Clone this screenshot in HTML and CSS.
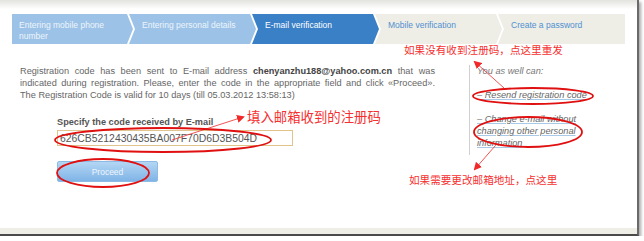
FILE: index.html
```html
<!DOCTYPE html>
<html lang="en">
<head>
    <meta charset="UTF-8">
    <title>E-mail verification</title>
    <link rel="stylesheet" href="styles.css">
</head>
<body>
    <div class="shot">
        <div class="steps">
            <div class="step done first">Entering mobile phone number</div>
            <div class="step done">Entering personal details</div>
            <div class="step active">E-mail verification</div>
            <div class="step todo">Mobile verification</div>
            <div class="step todo last">Create a password</div>
        </div>

        <div class="main">
            <div class="info">
                <div class="text">
                    <span class="line just">Registration code has been sent to E-mail address <b>chenyanzhu188@yahoo.com.cn</b> that was</span>
                    <span class="line just">indicated during registration. Please, enter the code in the appropriate field and click «Proceed».</span>
                    <span class="line">The Registration Code is valid for 10 days (till 05.03.2012 13:58:13)</span>
                </div>
                <div class="form">
                    <label for="code">Specify the code received by E-mail</label>
                    <input type="text" id="code" value="626CB5212430435BA007F70D6D3B504D">
                    <button>Proceed</button>
                </div>
            </div>
            <div class="side">
                <p>You as well can:</p>
                <p><a href="#">– Resend registration code</a></p>
                <p><a href="#">– Change e-mail without changing other personal information</a></p>
            </div>
        </div>

        <div class="foot"></div>

        <!-- red notes drawn over the screenshot -->
        <svg class="notes" width="639" height="236" viewBox="0 0 639 236">
            <defs>
                <marker id="head" markerWidth="8" markerHeight="8" refX="6" refY="4" orient="auto" markerUnits="userSpaceOnUse">
                    <path d="M0,0 L8,4 L0,8 Z" fill="#f02828"/>
                </marker>
            </defs>
            <text x="404" y="54" class="note">如果没有收到注册码，点这里重发</text>
            <text x="409" y="184" class="note">如果需要更改邮箱地址，点这里</text>
            <text x="247" y="122" class="note big">填入邮箱收到的注册码</text>
            <line x1="504" y1="88" x2="475" y2="62" class="arrow"/>
            <line x1="495" y1="146" x2="475" y2="169" class="arrow"/>
            <line x1="172" y1="140" x2="243" y2="117" class="arrow"/>
            <ellipse cx="533" cy="96" rx="60" ry="8" class="ring"/>
            <ellipse cx="528" cy="132" rx="54" ry="15" class="ring"/>
            <ellipse cx="163" cy="140" rx="108" ry="12" class="ring"/>
            <ellipse cx="103" cy="173" rx="46" ry="14" class="ring"/>
        </svg>
    </div>
</body>
</html>
```

FILE: styles.css
```css
body {
    margin: 0;
    background-color: #FFFFFF;
    font-family: 'Liberation Sans', Arial, sans-serif;
}
.shot {
    position: relative;
    width: 639px;
    height: 236px;
    box-sizing: border-box;
    display: flex;
    flex-direction: column;
    background: linear-gradient(#e2e2de 0, #ffffff 9px);
    border-right: 2px solid #6a6a6a;
    border-bottom: 2px solid #4a4a4a;
    box-shadow: 2px 2px 3px rgba(0, 0, 0, 0.35);
}

/* step bar */
.steps {
    display: flex;
    width: 613px;
    height: 30px;
    margin: 14px 0 0 12px;
}
.step {
    flex: 1;
    box-sizing: border-box;
    margin-left: -4px;
    padding: 6px 8px 0 13px;
    font-size: 8.5px;
    line-height: 11px;
    clip-path: polygon(0 0, calc(100% - 6px) 0, 100% 50%, calc(100% - 6px) 100%, 0 100%, 6px 50%);
}
.step.first {
    flex: 0 0 121px;
    margin-left: 0;
    padding-left: 7px;
    clip-path: polygon(0 0, calc(100% - 6px) 0, 100% 50%, calc(100% - 6px) 100%, 0 100%);
}
.step.last {
    clip-path: polygon(0 0, 100% 0, 100% 100%, 0 100%, 6px 50%);
}
.done {
    background-color: #9cc3e7;
    color: #eef4fb;
}
.active {
    background-color: #3a80c7;
    color: #FFFFFF;
}
.todo {
    background-color: #eeede6;
    color: #5190d0;
}

/* body */
.main {
    display: flex;
    flex: 1;
    margin-top: 21px;
    font-size: 9.2px;
    line-height: 12px;
    color: #666;
}
.info {
    width: 415px;
    margin-left: 20px;
}
.line {
    display: block;
}
.just {
    text-align: justify;
    text-align-last: justify;
}
.line b {
    color: #444;
}
.form {
    display: flex;
    flex-direction: column;
    align-items: flex-start;
    margin: 15px 0 0 37px;
}
.form label {
    font-weight: bold;
    color: #555;
}
.form input {
    box-sizing: border-box;
    width: 236px;
    height: 16px;
    margin-top: 2px;
    padding: 0 2px;
    border: 1px solid #e1c48c;
    font-family: 'Liberation Sans', Arial, sans-serif;
    font-size: 10.4px;
    color: #555;
}
.form button {
    width: 101px;
    height: 21px;
    margin-top: 15px;
    border: 1px solid #8cbbe5;
    border-radius: 2px;
    background: linear-gradient(#b3d6f4, #80b4e6);
    color: #eef5fc;
    font-family: 'Liberation Sans', Arial, sans-serif;
    font-size: 8.5px;
}
.side {
    height: 90px;
    margin-left: 34px;
    padding-left: 7px;
    border-left: 1px solid #d0d0d0;
    width: 110px;
    font-style: italic;
    color: #777;
}
.side p {
    margin: 0 0 12px 0;
}
.side a {
    color: #666;
    text-decoration: underline;
    text-decoration-color: #a9c9e8;
}
.foot {
    height: 6px;
    background-color: #efeee6;
}

/* annotations */
.notes {
    position: absolute;
    left: 0;
    top: 0;
    pointer-events: none;
}
.note {
    font-family: 'Noto Sans CJK SC', sans-serif;
    font-size: 10.6px;
    fill: #f53030;
}
.note.big {
    font-size: 13.4px;
}
.arrow {
    stroke: #f04040;
    stroke-width: 0.9;
    marker-end: url(#head);
}
.ring {
    fill: none;
    stroke: #e01010;
    stroke-width: 1.8;
}
```
